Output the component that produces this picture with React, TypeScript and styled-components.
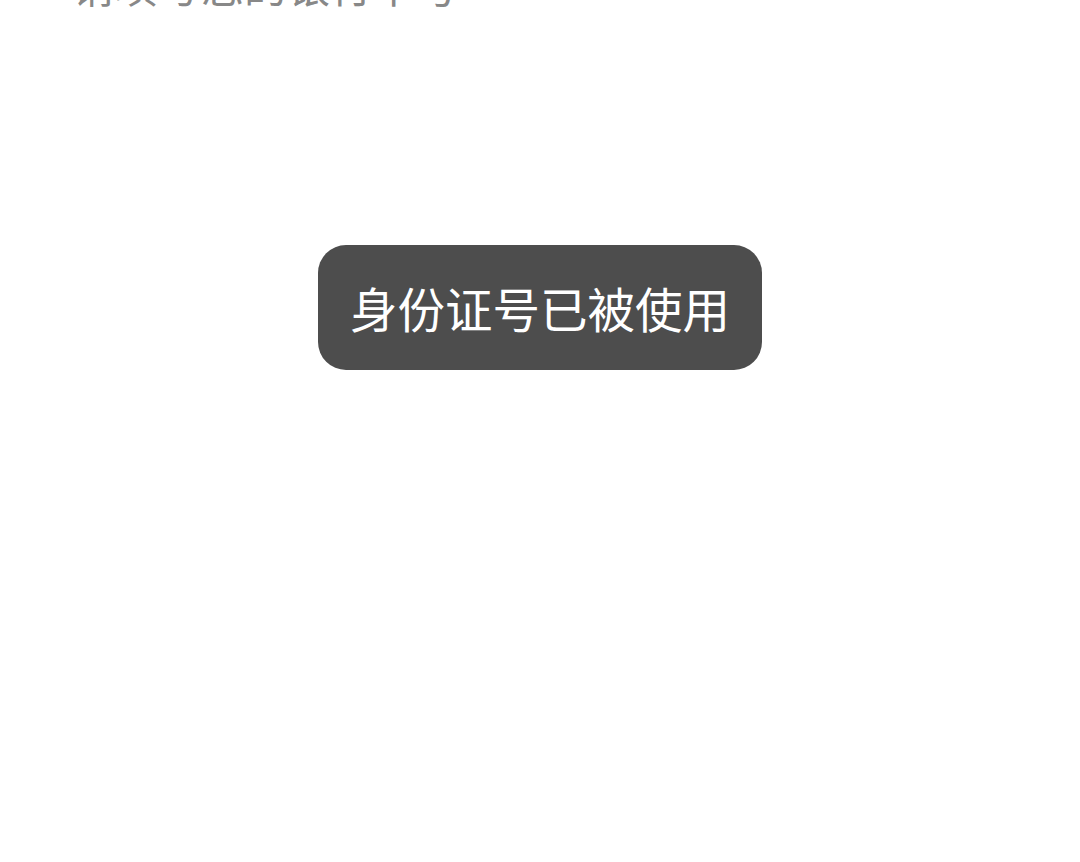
import React from 'react';
import styled, { createGlobalStyle } from 'styled-components';

const Global = createGlobalStyle`
  html, body {
    margin: 0;
    padding: 0;
    background: #ffffff;
    overflow: hidden;
  }
  body {
    font-family: "Noto Sans CJK SC", "Noto Sans", sans-serif;
  }
`;

const Page = styled.div`
  width: 1080px;
  height: 862px;
  overflow: hidden;
  background: #fff;
`;

const Form = styled.div`
  margin-top: -41px;
  padding: 0 72px;
`;

const Placeholder = styled.div`
  font-size: 43px;
  line-height: 50px;
  color: #888888;
`;

const Toast = styled.div`
  position: fixed;
  top: 245px;
  left: 50%;
  transform: translateX(-50%);
  height: 125px;
  padding: 0 32px;
  box-sizing: border-box;
  display: flex;
  align-items: center;
  justify-content: center;
  background: #4d4d4d;
  border-radius: 28px;
  color: #ffffff;
  font-size: 47.5px;
  white-space: nowrap;
`;

export default function App() {
  return (
    <Page>
      <Global />
      <Form>
        <Placeholder>请填写您的银行卡号</Placeholder>
      </Form>
      <Toast>身份证号已被使用</Toast>
    </Page>
  );
}
